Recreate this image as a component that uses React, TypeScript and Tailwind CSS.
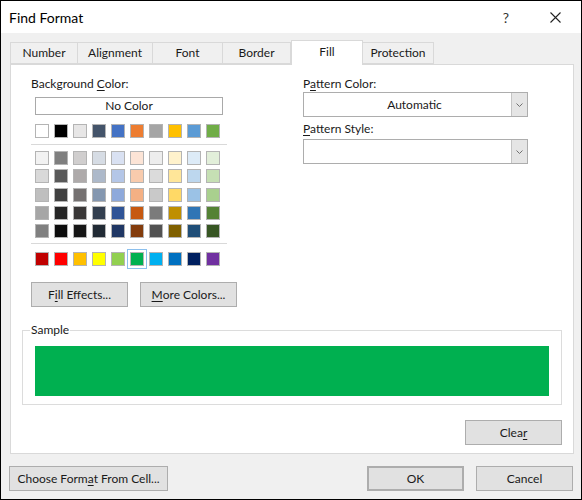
import React from 'react';

const themeRow = ['#ffffff', '#000000', '#e7e6e6', '#44546a', '#4472c4', '#ed7d31', '#a5a5a5', '#ffc000', '#5b9bd5', '#70ad47'];

const tintRows = [
  ['#f2f2f2', '#7f7f7f', '#d0cece', '#d6dce4', '#d9e1f2', '#fce4d6', '#ededed', '#fff2cc', '#ddebf7', '#e2efda'],
  ['#d9d9d9', '#595959', '#aeaaaa', '#adb9ca', '#b4c6e7', '#f8cbad', '#dbdbdb', '#ffe699', '#bdd7ee', '#c6e0b4'],
  ['#bfbfbf', '#404040', '#757171', '#8497b0', '#8ea9db', '#f4b084', '#c9c9c9', '#ffd966', '#9bc2e6', '#a9d08e'],
  ['#a6a6a6', '#262626', '#3a3838', '#333f4f', '#305496', '#c65911', '#7b7b7b', '#bf8f00', '#2f75b5', '#548235'],
  ['#808080', '#0d0d0d', '#161616', '#222b35', '#203764', '#833c0c', '#525252', '#806000', '#1f4e78', '#375623'],
];

const standardRow = ['#c00000', '#ff0000', '#ffc000', '#ffff00', '#92d050', '#00b050', '#00b0f0', '#0070c0', '#002060', '#7030a0'];

const tabs = ['Number', 'Alignment', 'Font', 'Border', 'Fill', 'Protection'];
const tabWidths = ['w-[68px]', 'w-[75px]', 'w-[70px]', 'w-[68px]', 'w-[72px]', 'w-[71px]'];

const Swatch: React.FC<{ color: string; selected?: boolean }> = ({ color, selected }) => (
  <div
    className={`w-[14px] h-[14px] border border-[#b4b4b4] ${selected ? 'outline outline-1 outline-[#8cc0ee] outline-offset-[2px]' : ''}`}
    style={{ backgroundColor: color }}
  />
);

const SwatchRow: React.FC<{ colors: string[]; selectedIndex?: number }> = ({ colors, selectedIndex }) => (
  <div className="flex gap-[5px]">
    {colors.map((c, i) => (
      <Swatch key={i} color={c} selected={i === selectedIndex} />
    ))}
  </div>
);

const Button: React.FC<{ className?: string; children: React.ReactNode }> = ({ className = '', children }) => (
  <div
    className={`h-[25px] flex items-center justify-center bg-[#e1e1e1] border border-[#adadad] text-[12px] text-[#1a1a1a] ${className}`}
  >
    {children}
  </div>
);

const Combo: React.FC<{ value?: string }> = ({ value }) => (
  <div className="w-[225px] h-[25px] flex border border-[#adadad] bg-white">
    <div className="flex-1 flex items-center justify-center text-[12px] text-[#1a1a1a] pl-[14px]">{value}</div>
    <div className="w-[16px] h-full bg-[#e5e5e5] border-l border-[#c4c4c4] flex items-center justify-center">
      <svg width="7" height="4" viewBox="0 0 7 4" fill="none" stroke="#707070" strokeWidth="1">
        <path d="M0.5 0.5 L3.5 3.5 L6.5 0.5" />
      </svg>
    </div>
  </div>
);

export default function App() {
  return (
    <div
      className="w-[582px] h-[500px] border border-black bg-[#f0f0f0] flex flex-col text-[#1a1a1a]"
      style={{ fontFamily: 'Lato, "Noto Sans", sans-serif' }}
    >
      {/* title bar */}
      <div className="h-[32px] bg-white flex items-center shrink-0">
        <span className="pl-[8px] text-[14px] text-black">Find Format</span>
        <span className="ml-auto mr-[41px] text-[14px] text-[#333]">?</span>
        <svg className="mr-[20px]" width="11" height="11" viewBox="0 0 11 11" stroke="#222" strokeWidth="1.1">
          <path d="M0.5 0.5 L10.5 10.5 M10.5 0.5 L0.5 10.5" />
        </svg>
      </div>

      <div className="flex-1 flex flex-col px-[8px]">
        {/* tabs */}
        <div className="flex items-end ml-px mt-[7px] h-[24px]">
          {tabs.map((t, i) =>
            t === 'Fill' ? (
              <div
                key={t}
                className={`${tabWidths[i]} h-[25px] -mb-px bg-white border border-[#d9d9d9] border-b-0 flex items-center justify-center text-[12px] relative z-10 pb-[2px]`}
              >
                {t}
              </div>
            ) : (
              <div
                key={t}
                className={`${tabWidths[i]} h-[22px] bg-[#f0f0f0] border border-[#d9d9d9] ${i > 0 ? 'border-l-0' : ''} flex items-center justify-center text-[12px]`}
              >
                {t}
              </div>
            )
          )}
        </div>

        {/* panel */}
        <div className="ml-px w-[564px] h-[390px] bg-white border border-[#d9d9d9] flex flex-col">
          <div className="flex pl-[20px] pt-[11px]">
            {/* left column */}
            <div className="w-[272px] flex flex-col">
              <div className="h-[16px] leading-[16px] text-[12px]">
                Background <u className="underline-offset-2">C</u>olor:
              </div>
              <div className="ml-[4px] mt-[5px] w-[188px] h-[18px] border border-[#a9a9a9] flex items-center justify-center text-[12px]">
                No Color
              </div>
              <div className="ml-[4px] mt-[9px]">
                <SwatchRow colors={themeRow} />
              </div>
              <div className="mt-[6px] w-[196px] h-px bg-[#d9d9d9]" />
              <div className="ml-[4px] mt-[6px] flex flex-col gap-[4.3px]">
                {tintRows.map((row, i) => (
                  <SwatchRow key={i} colors={row} />
                ))}
              </div>
              <div className="mt-[5px] w-[196px] h-px bg-[#d9d9d9]" />
              <div className="ml-[4px] mt-[8px]">
                <SwatchRow colors={standardRow} selectedIndex={5} />
              </div>
              <div className="mt-[16px] flex gap-[12px]">
                <Button className="w-[97px]">
                  F<u className="underline-offset-2">i</u>ll Effects...
                </Button>
                <Button className="w-[97px]">
                  <u className="underline-offset-2">M</u>ore Colors...
                </Button>
              </div>
            </div>

            {/* right column */}
            <div className="flex flex-col">
              <div className="h-[16px] leading-[16px] text-[12px]">
                P<u className="underline-offset-2">a</u>ttern Color:
              </div>
              <div>
                <Combo value="Automatic" />
              </div>
              <div className="mt-[4px] h-[16px] leading-[16px] text-[12px]">
                <u className="underline-offset-2">P</u>attern Style:
              </div>
              <div className="mt-[2px]">
                <Combo />
              </div>
            </div>
          </div>

          {/* sample */}
          <fieldset className="mx-[11px] mt-[15px] border border-[#dcdcdc] px-[12px] pb-[8px] pt-0">
            <legend className="ml-[-5px] px-px text-[12px] leading-[16px]">Sample</legend>
            <div className="mt-[8px] h-[50px] bg-[#00b050]" />
          </fieldset>

          <div className="flex justify-end mr-[11px] mt-[15px]">
            <Button className="w-[97px] h-[25px]">
              Clea<u className="underline-offset-2">r</u>
            </Button>
          </div>
        </div>

        {/* bottom buttons */}
        <div className="flex mt-[12px]">
          <Button className="w-[159px]">
            Choose Form<u className="underline-offset-2">a</u>t From Cell...
          </Button>
          <Button className="w-[97px] ml-auto border-2 border-[#0078d7]">OK</Button>
          <Button className="w-[97px] ml-[12px]">Cancel</Button>
        </div>
      </div>
    </div>
  );
}
